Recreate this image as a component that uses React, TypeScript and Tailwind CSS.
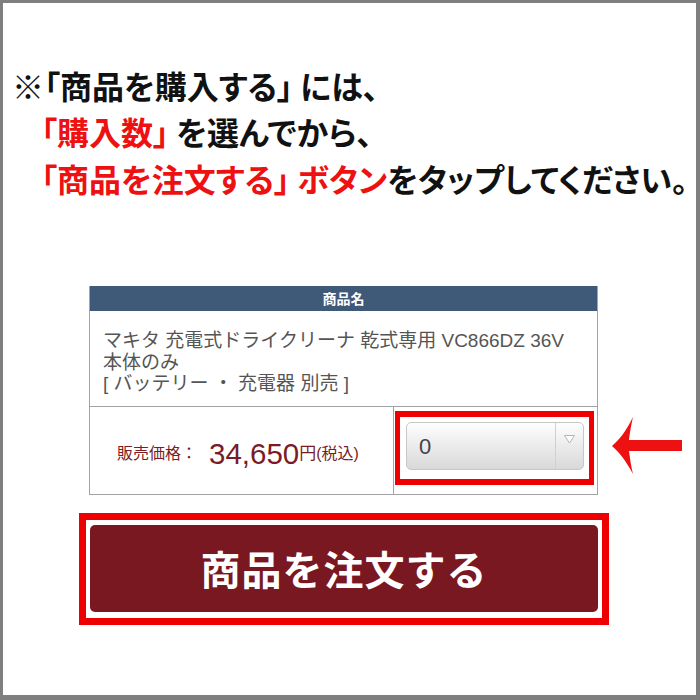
const jp = "font-['Noto_Sans_CJK_JP',sans-serif]";
const mixed = "font-['Liberation_Sans','Noto_Sans_CJK_JP',sans-serif]";

function LeftArrow() {
  return (
    <svg width="74" height="60" viewBox="0 0 74 60" className="block">
      <path
        d="M1 29 C9 22 15 14 22 0 C20 9 19 15 18 23 L71 23 L71 34 L18 34 C19 42 20 49 22 57 C15 44 9 36 1 29 Z"
        fill="#ee1111"
      />
    </svg>
  );
}

function QtySelect() {
  return (
    <div className="ml-[6px] mt-[5px] flex h-[48px] w-[178px] overflow-hidden rounded-[5px] border border-[#c8c8c8] bg-gradient-to-b from-[#fefefe] to-[#d9d9d9]">
      <div className={`flex flex-1 items-center pl-[12px] text-[22px] text-[#444] ${mixed}`}>0</div>
      <div className="flex w-[28px] justify-center border-l border-[#d0d0d0] pt-[12px]">
        <svg width="11" height="9" viewBox="0 0 11 9">
          <path d="M0.5 0.5 L10.5 0.5 L5.5 8 Z" fill="#ffffff" stroke="#b5b5b5" strokeWidth="1" />
        </svg>
      </div>
    </div>
  );
}

export default function App() {
  return (
    <div className="h-[700px] w-[700px] overflow-hidden border-t-[3px] border-l-[3px] border-r-[4px] border-b-[5px] border-[#7f7f7f] bg-white">
      <div className={`pt-[59px] text-[32px] font-bold text-[#111] [font-feature-settings:'palt'] ${jp}`}>
        <div className="h-[46px] pl-[9px] leading-[46px]">※「商品を購入する」 には、</div>
        <div className="h-[47px] pl-[38px] leading-[47px]">
          <span className="text-[#ee1111]">「購入数」</span> を選んでから、
        </div>
        <div className="h-[47px] pl-[38px] leading-[47px] whitespace-nowrap">
          <span className="text-[#ee1111]">「商品を注文する」 ボタン</span>をタップしてください。
        </div>
      </div>

      <div className="ml-[86px] mt-[84px] flex items-end">
        <div className="w-[509px] border border-t-0 border-[#a3a3a3]">
          <div className={`flex h-[25px] items-center justify-center bg-[#3f5a78] text-[14px] font-bold text-white ${jp}`}>
            商品名
          </div>
          <div className={`h-[96px] border-b border-[#a3a3a3] pl-[13px] pt-[19px] text-[19px] leading-[21.5px] text-[#555] ${mixed}`}>
            マキタ 充電式ドライクリーナ 乾式専用 VC866DZ 36V
            <br />
            本体のみ
            <br />[ バッテリー ・ 充電器 別売 ]
          </div>
          <div className="flex h-[87px]">
            <div className={`flex w-[304px] items-center border-r border-[#a3a3a3] pl-[27px] pt-[6px] text-[#7a1c26] ${mixed}`}>
              <span className="text-[16px]">販売価格：</span>
              <span className="ml-[12px] text-[29.5px] leading-none">34,650</span>
              <span className="text-[17px]">円</span>
              <span className="text-[16px]">(税込)</span>
            </div>
            <div className="flex-1 pt-[4px]">
              <div className="ml-[1px] h-[74px] w-[199px] border-x-[5px] border-y-[6px] border-[#ee0000] bg-white">
                <QtySelect />
              </div>
            </div>
          </div>
        </div>
        <div className="mb-[18px] ml-[13px]">
          <LeftArrow />
        </div>
      </div>

      <div className="ml-[76px] mt-[18px] h-[112px] w-[530px] border-[7px] border-[#ee0000] pl-[4px] pt-[5px]">
        <div className={`flex h-[87px] w-[508px] items-center justify-center rounded-[5px] bg-[#7a1822] pb-[2px] text-[40px] font-bold tracking-[1px] text-white ${jp}`}>
          商品を注文する
        </div>
      </div>
    </div>
  );
}
